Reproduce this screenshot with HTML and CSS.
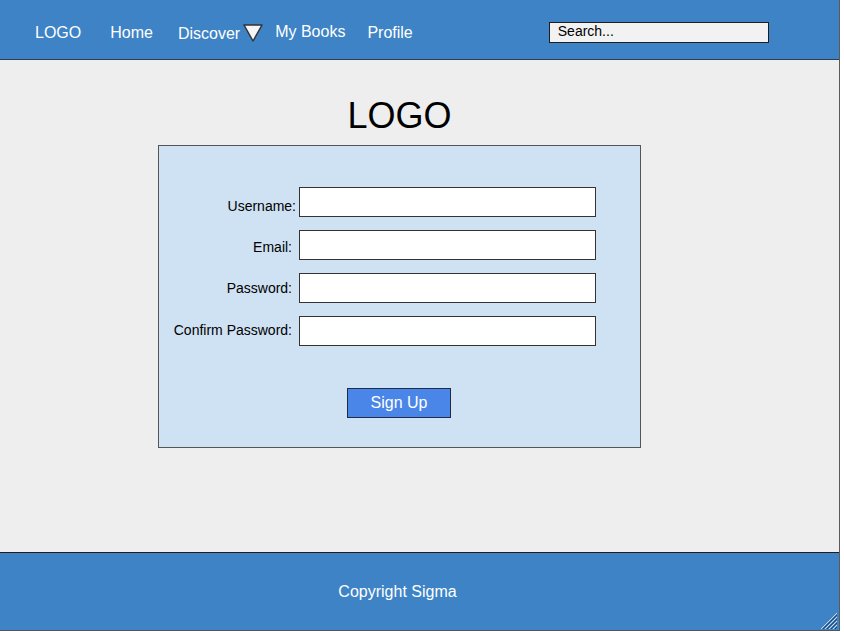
FILE: index.html
```html
<!DOCTYPE html>
<html>
<head>
<meta charset="utf-8">
<link rel="stylesheet" href="styles.css">
</head>
<body>
<div class="frame">
  <header class="topbar">
    <span class="nav-item logo">LOGO</span>
    <span class="nav-item home">Home</span>
    <span class="nav-item discover">Discover</span>
    <svg class="caret" width="20" height="18" viewBox="0 0 20 18"><polygon points="1,1 19,1 10,17" fill="#f5f5f5" stroke="#333" stroke-width="1.5" stroke-linejoin="round"/></svg>
    <span class="nav-item books">My Books</span>
    <span class="nav-item profile">Profile</span>
    <div class="search">Search...</div>
  </header>
  <main class="content">
    <h1 class="brand">LOGO</h1>
    <div class="card">
      <div class="form-grid">
        <label class="lbl lbl-user">Username:</label><div class="field"></div>
        <label class="lbl lbl-email">Email:</label><div class="field"></div>
        <label class="lbl lbl-pass">Password:</label><div class="field"></div>
        <label class="lbl lbl-confirm">Confirm Password:</label><div class="field"></div>
      </div>
      <div class="btn-row"><div class="btn">Sign Up</div></div>
    </div>
  </main>
  <footer class="footer">
    <span class="copy">Copyright Sigma</span>
    <svg class="grip" width="18" height="18" viewBox="0 0 18 18">
      <g stroke="#c8d6e6" stroke-width="1">
        <line x1="17" y1="1" x2="1" y2="17"/>
        <line x1="17" y1="5" x2="5" y2="17"/>
        <line x1="17" y1="9" x2="9" y2="17"/>
        <line x1="17" y1="13" x2="13" y2="17"/>
      </g>
      <g stroke="#24466b" stroke-width="1">
        <line x1="17" y1="3" x2="3" y2="17"/>
        <line x1="17" y1="7" x2="7" y2="17"/>
        <line x1="17" y1="11" x2="11" y2="17"/>
        <line x1="17" y1="15" x2="15" y2="17"/>
      </g>
    </svg>
  </footer>
</div>
</body>
</html>
```
FILE: styles.css
```css
html, body {
  margin: 0;
  padding: 0;
  background: #ffffff;
}
body {
  font-family: "Liberation Sans", Arial, sans-serif;
}
.frame {
  width: 840px;
  height: 631px;
  box-sizing: border-box;
  border-right: 1px solid #5a5a5a;
  border-bottom: 1px solid #555;
  display: flex;
  flex-direction: column;
  background: #eeeeee;
}
.topbar {
  height: 59px;
  flex: none;
  background: #3d83c6;
  border-bottom: 1px solid #2f3f4f;
  display: flex;
  align-items: center;
  color: #fff;
  font-size: 16px;
}
.nav-item {
  line-height: 18px;
  padding-top: 7px;
}
.logo { margin-left: 35px; }
.home { margin-left: 29px; }
.discover { margin-left: 25px; padding-top: 9px; }
.caret { margin-left: 3px; margin-top: 7px; }
.books { margin-left: 12px; padding-top: 4px; }
.profile { margin-left: 22px; padding-top: 7px; }
.search {
  margin-left: 136px;
  width: 220px;
  height: 21px;
  box-sizing: border-box;
  background: #f2f2f2;
  border: 1px solid #1e1e1e;
  color: #000;
  font-size: 14px;
  line-height: 17px;
  padding-left: 8px;
  margin-top: 5px;
}
.content {
  flex: 1;
  display: flex;
  flex-direction: column;
  align-items: flex-start;
}
.brand {
  margin: 35px 0 0 0;
  width: 799px;
  text-align: center;
  font-size: 36px;
  font-weight: normal;
  line-height: 41px;
  color: #000;
}
.card {
  margin: 9px 0 0 158px;
  width: 483px;
  height: 303px;
  box-sizing: border-box;
  background: #cfe2f3;
  border: 1px solid #555;
  padding-top: 41px;
}
.form-grid {
  display: grid;
  grid-template-columns: 133px 297px;
  grid-auto-rows: 30px;
  column-gap: 7px;
  row-gap: 13px;
}
.lbl {
  font-size: 14px;
  color: #000;
  text-align: right;
  align-self: center;
}
.lbl-user { margin-right: -4px; padding-top: 7px; }
.lbl-email { padding-top: 3px; }
.lbl-pass { padding-top: 0; }
.lbl-confirm { padding-top: 0; margin-top: -3px; }
.field {
  background: #fff;
  border: 1px solid #333;
  box-sizing: border-box;
}
.btn-row {
  margin-top: 42px;
  padding-left: 188px;
}
.btn {
  width: 104px;
  height: 30px;
  box-sizing: border-box;
  background: #4a86e8;
  border: 1px solid #1f2d44;
  color: #fff;
  font-size: 16px;
  line-height: 28px;
  text-align: center;
}
.footer {
  height: 77px;
  flex: none;
  background: #3d83c6;
  border-top: 1px solid #1e1e1e;
  display: flex;
  align-items: center;
  justify-content: center;
  position: relative;
  padding-right: 44px;
}
.copy {
  color: #fff;
  font-size: 16px;
  padding-top: 1px;
}
.grip {
  position: absolute;
  right: 1px;
  bottom: 0;
}
```
